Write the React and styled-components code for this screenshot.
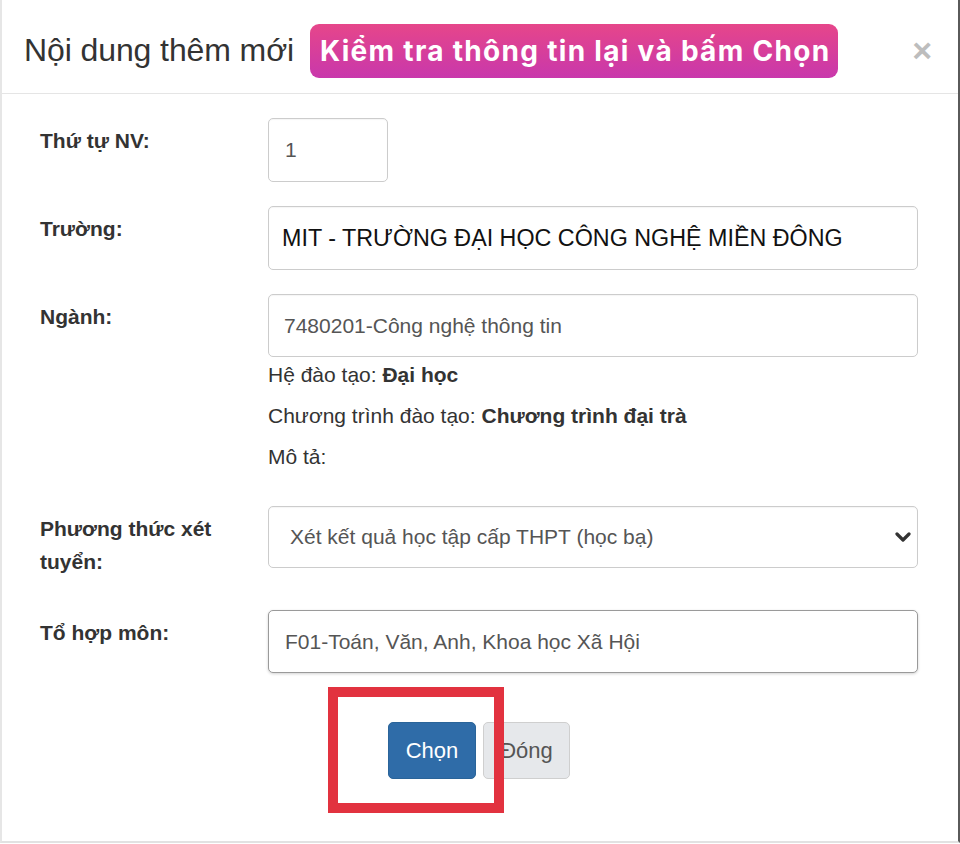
import React from "react";
import styled, { createGlobalStyle } from "styled-components";

const Global = createGlobalStyle`
  html, body { margin: 0; padding: 0; background: #ffffff; }
  body { font-family: "Liberation Sans", Arial, sans-serif; color: #333; }
  * { box-sizing: border-box; }
`;

const Modal = styled.div`
  position: relative;
  width: 960px;
  height: 843px;
  background: #fff;
  border-left: 2px solid #e6e6e6;
  border-right: 2px solid #5a5a5a;
  border-bottom: 2px solid #e2e2e2;
`;

const Header = styled.div`
  display: flex;
  align-items: center;
  height: 94px;
  padding: 7px 26px 0 22px;
  border-bottom: 1px solid #e5e5e5;
`;

const Title = styled.h4`
  margin: 0;
  font-size: 32px;
  font-weight: 400;
  color: #333;
  letter-spacing: -0.1px;
`;

const Badge = styled.div`
  margin-left: 16px;
  margin-top: 1px;
  height: 54px;
  display: flex;
  align-items: center;
  padding: 0 8px 0 10px;
  border-radius: 9px;
  background: linear-gradient(180deg, #e6468a 0%, #d43d9e 60%, #c938ac 100%);
  color: #fff;
  font-family: Inter, Roboto, "Noto Sans", sans-serif;
  font-weight: 700;
  font-size: 28px;
  letter-spacing: 1.3px;
  white-space: nowrap;
`;

const Close = styled.span`
  margin-left: auto;
  font-size: 34px;
  line-height: 1;
  font-weight: 700;
  color: #bdbdbd;
  font-family: "Liberation Sans", Arial, sans-serif;
`;

const Body = styled.div`
  padding: 24px 40px 0 38px;
`;

const Row = styled.div`
  display: grid;
  grid-template-columns: 228px 650px;
  align-items: start;
  margin-top: ${(p) => p.$mt ?? 0}px;
  margin-bottom: ${(p) => p.$mb ?? 24}px;
`;

const Label = styled.label`
  font-size: 21px;
  font-weight: 700;
  color: #333;
  line-height: 33px;
  padding: 6px 0 8px 0;
`;

const Field = styled.div`
  height: ${(p) => p.$h ?? 64}px;
  width: ${(p) => (p.$w ? `${p.$w}px` : "100%")};
  display: flex;
  align-items: center;
  padding-left: ${(p) => p.$pl ?? 15}px;
  border: 1px solid ${(p) => (p.$dark ? "#9a9a9a" : "#cccccc")};
  border-radius: 5px;
  background: #fff;
  box-shadow: ${(p) =>
    p.$dark ? "0 1px 3px rgba(0,0,0,0.18)" : "inset 0 1px 1px rgba(0,0,0,0.04)"};
  font-size: ${(p) => p.$fs ?? 21}px;
  color: ${(p) => p.$color ?? "#555"};
  white-space: nowrap;
`;

const SelectBox = styled(Field)`
  justify-content: space-between;
  padding-right: 6px;
`;

const Info = styled.div`
  padding-bottom: 11px;
`;

const InfoLine = styled.p`
  margin: 13px 0 0;
  font-size: 21px;
  line-height: 28px;
  color: #333;
  &:first-child { margin-top: 4px; }
  b { font-weight: 700; }
`;

const Footer = styled.div`
  display: flex;
  justify-content: center;
  gap: 7px;
  margin-top: 49px;
`;

const Button = styled.button`
  height: 57px;
  width: ${(p) => p.$w}px;
  border-radius: 5px;
  font-family: "Liberation Sans", Arial, sans-serif;
  font-size: 22px;
  border: 1px solid ${(p) => (p.$primary ? "#2a6499" : "#cfcfcf")};
  background: ${(p) => (p.$primary ? "#2f6ca8" : "#e6e8eb")};
  color: ${(p) => (p.$primary ? "#fff" : "#555")};
  padding: 0;
`;

const Highlight = styled.div`
  position: absolute;
  left: 326px;
  top: 687px;
  width: 176px;
  height: 126px;
  border: 10px solid #e2323f;
  pointer-events: none;
`;

function Chevron() {
  return (
    <svg width="16" height="12" viewBox="0 0 16 12">
      <polyline
        points="2,3 8,9 14,3"
        fill="none"
        stroke="#333"
        strokeWidth="3.2"
        strokeLinecap="round"
        strokeLinejoin="round"
      />
    </svg>
  );
}

export default function App() {
  return (
    <>
      <Global />
      <Modal>
        <Header>
          <Title>Nội dung thêm mới</Title>
          <Badge>Kiểm tra thông tin lại và bấm Chọn</Badge>
          <Close>×</Close>
        </Header>
        <Body>
          <Row>
            <Label>Thứ tự NV:</Label>
            <Field $w={120} $pl={16}>1</Field>
          </Row>
          <Row>
            <Label>Trường:</Label>
            <Field $fs={23.3} $color="#111" $pl={13}>
              MIT - TRƯỜNG ĐẠI HỌC CÔNG NGHỆ MIỀN ĐÔNG
            </Field>
          </Row>
          <Row $mb={0}>
            <Label>Ngành:</Label>
            <div>
              <Field $pl={15} $h={63}>7480201-Công nghệ thông tin</Field>
              <Info>
                <InfoLine>
                  Hệ đào tạo: <b>Đại học</b>
                </InfoLine>
                <InfoLine>
                  Chương trình đào tạo: <b>Chương trình đại trà</b>
                </InfoLine>
                <InfoLine>Mô tả:</InfoLine>
              </Info>
            </div>
          </Row>
          <Row $mt={24}>
            <Label>
              Phương thức xét
              <br />
              tuyển:
            </Label>
            <SelectBox $pl={21} $h={62}>
              <span>Xét kết quả học tập cấp THPT (học bạ)</span>
              <Chevron />
            </SelectBox>
          </Row>
          <Row $mb={0}>
            <Label>Tổ hợp môn:</Label>
            <Field $dark $pl={16} $h={63}>
              F01-Toán, Văn, Anh, Khoa học Xã Hội
            </Field>
          </Row>
          <Footer>
            <Button $primary $w={88}>Chọn</Button>
            <Button $w={87}>Đóng</Button>
          </Footer>
        </Body>
        <Highlight />
      </Modal>
    </>
  );
}
